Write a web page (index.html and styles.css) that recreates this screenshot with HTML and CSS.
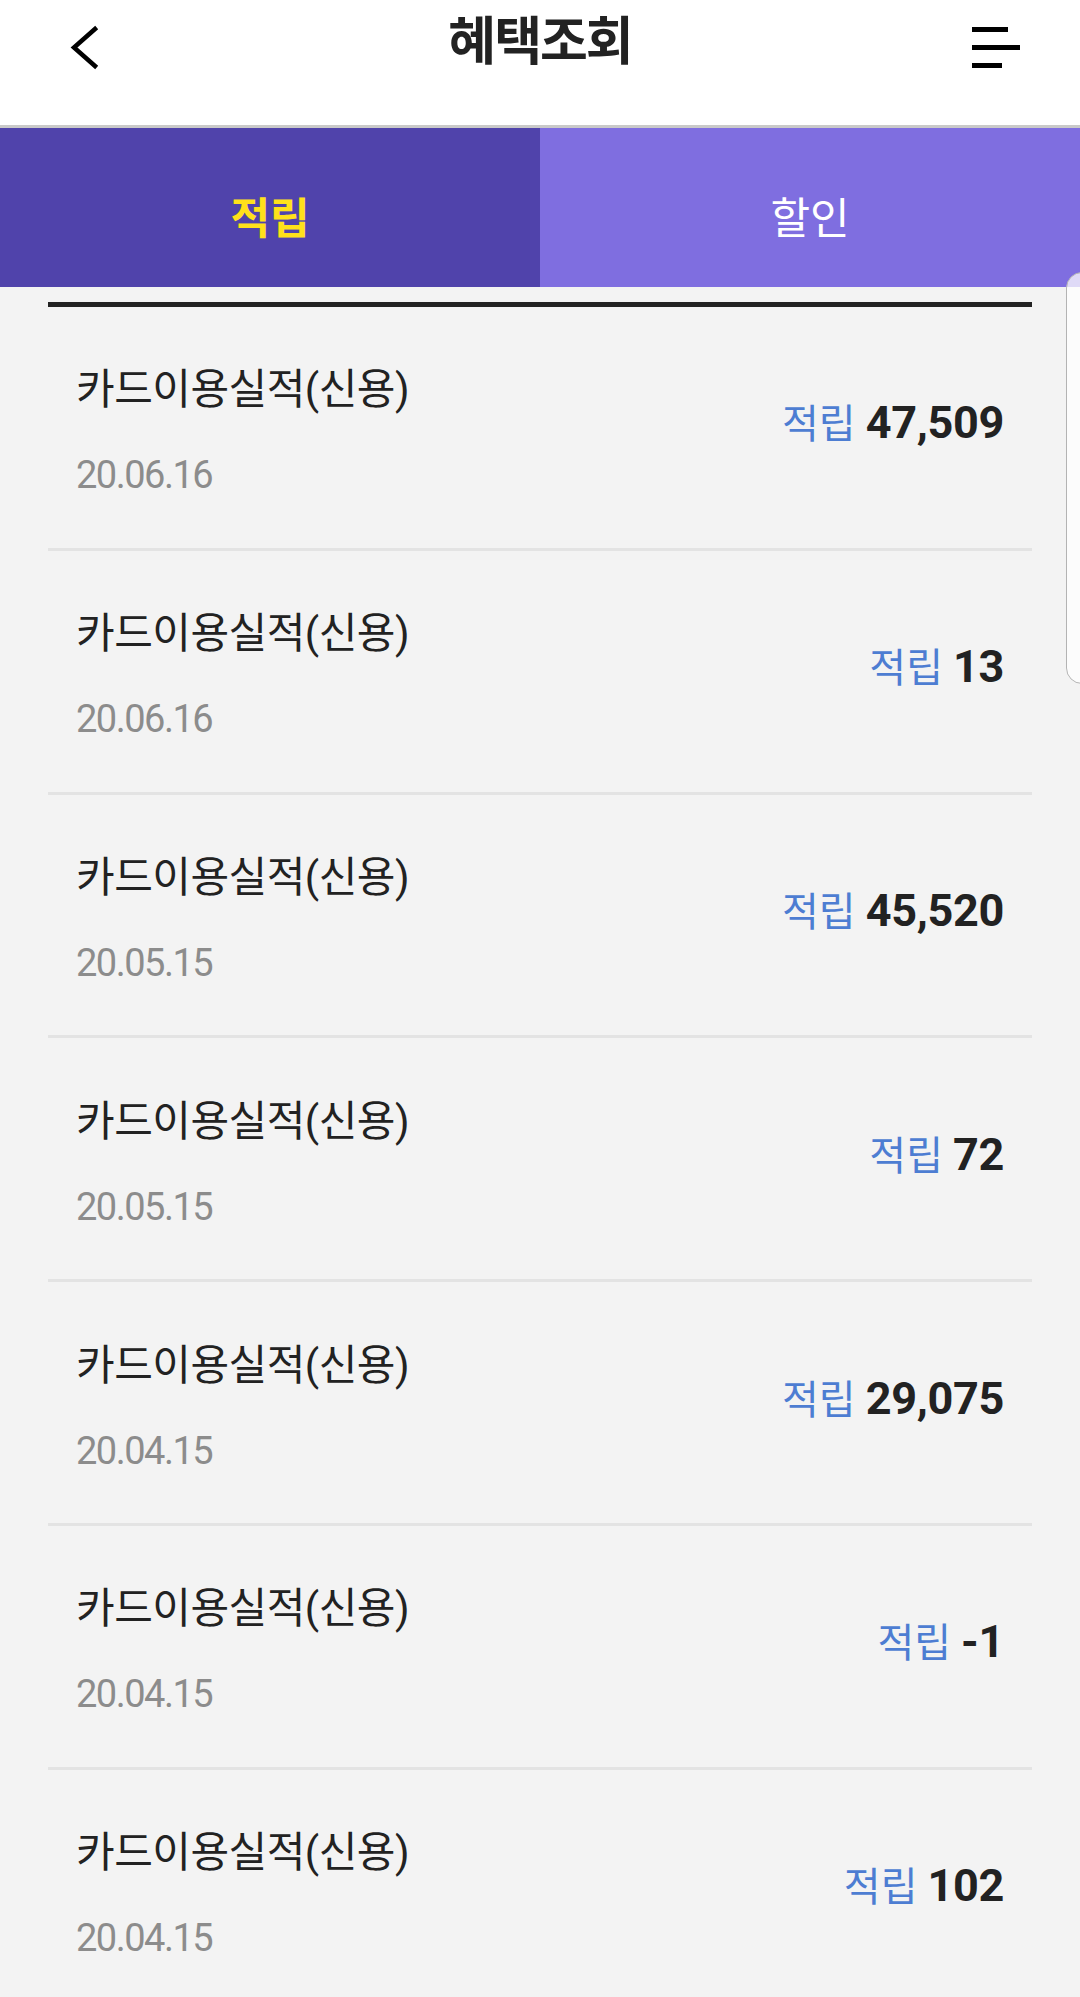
FILE: index.html
```html
<!DOCTYPE html>
<html lang="ko">
<head>
    <meta charset="UTF-8">
    <meta name="viewport" content="width=device-width, initial-scale=1.0">
    <title>혜택조회</title>
    <link rel="stylesheet" href="styles.css">
</head>
<body>

    <header class="header">
        <div class="header-left">
            <svg class="icon-back" width="44" height="56" viewBox="0 0 44 56">
                <polyline points="35,9 14,27.5 35,46" fill="none" stroke="#000" stroke-width="4.5" stroke-linecap="square" stroke-linejoin="miter"/>
            </svg>
        </div>
        <h1 class="title">혜택조회</h1>
        <div class="header-right">
            <svg class="icon-menu" width="48" height="48" viewBox="0 0 48 48">
                <rect x="0" y="3" width="36" height="5" fill="#000"/>
                <rect x="0" y="21" width="48" height="5" fill="#000"/>
                <rect x="0" y="39" width="30" height="5" fill="#000"/>
            </svg>
        </div>
    </header>

    <nav class="tabs">
        <div class="tab tab-active">적립</div>
        <div class="tab">할인</div>
    </nav>

    <div class="container">
        <ul class="benefit-list">
            <li class="benefit-row">
                <div class="benefit-info">
                    <p class="benefit-title">카드이용실적(신용)</p>
                    <p class="benefit-date">20.06.16</p>
                </div>
                <div class="benefit-amount"><span class="amount-label">적립</span><span class="amount-value">47,509</span></div>
            </li>
            <li class="benefit-row">
                <div class="benefit-info">
                    <p class="benefit-title">카드이용실적(신용)</p>
                    <p class="benefit-date">20.06.16</p>
                </div>
                <div class="benefit-amount"><span class="amount-label">적립</span><span class="amount-value">13</span></div>
            </li>
            <li class="benefit-row">
                <div class="benefit-info">
                    <p class="benefit-title">카드이용실적(신용)</p>
                    <p class="benefit-date">20.05.15</p>
                </div>
                <div class="benefit-amount"><span class="amount-label">적립</span><span class="amount-value">45,520</span></div>
            </li>
            <li class="benefit-row">
                <div class="benefit-info">
                    <p class="benefit-title">카드이용실적(신용)</p>
                    <p class="benefit-date">20.05.15</p>
                </div>
                <div class="benefit-amount"><span class="amount-label">적립</span><span class="amount-value">72</span></div>
            </li>
            <li class="benefit-row">
                <div class="benefit-info">
                    <p class="benefit-title">카드이용실적(신용)</p>
                    <p class="benefit-date">20.04.15</p>
                </div>
                <div class="benefit-amount"><span class="amount-label">적립</span><span class="amount-value">29,075</span></div>
            </li>
            <li class="benefit-row">
                <div class="benefit-info">
                    <p class="benefit-title">카드이용실적(신용)</p>
                    <p class="benefit-date">20.04.15</p>
                </div>
                <div class="benefit-amount"><span class="amount-label">적립</span><span class="amount-value">-1</span></div>
            </li>
            <li class="benefit-row">
                <div class="benefit-info">
                    <p class="benefit-title">카드이용실적(신용)</p>
                    <p class="benefit-date">20.04.15</p>
                </div>
                <div class="benefit-amount"><span class="amount-label">적립</span><span class="amount-value">102</span></div>
            </li>
        </ul>
    </div>

    <!-- edge panel handle -->
    <div class="edge-handle"></div>

</body>
</html>
```

FILE: styles.css
```css
* {
    margin: 0;
    padding: 0;
    box-sizing: border-box;
}

body {
    width: 1080px;
    background-color: #f3f3f3;
    font-family: Roboto, "Noto Sans CJK KR", sans-serif;
    color: #222;
    overflow: hidden;
}

/* Header */
.header {
    display: grid;
    grid-template-columns: 1fr auto 1fr;
    align-items: start;
    height: 128px;
    background: #fff;
    border-bottom: 3px solid #c9c9c9;
}

.header-left {
    padding-left: 60px;
}

.icon-back {
    display: block;
    margin-top: 20px;
}

.title {
    font-family: "Noto Sans CJK KR", sans-serif;
    font-size: 52px;
    font-weight: bold;
    line-height: 76px;
    letter-spacing: -2px;
    color: #222;
}

.header-right {
    justify-self: end;
    padding-right: 60px;
}

.icon-menu {
    display: block;
    margin-top: 24px;
}

/* Tabs */
.tabs {
    display: flex;
    height: 159px;
}

.tab {
    flex: 1;
    display: flex;
    align-items: center;
    justify-content: center;
    padding-top: 14px;
    background: #7f6ee0;
    color: #fff;
    font-family: "Noto Sans CJK KR", sans-serif;
    font-size: 43px;
}

.tab-active {
    background: #5043ab;
    color: #ffe11b;
    font-weight: bold;
}

/* List */
.container {
    padding: 15px 48px 0;
}

.benefit-list {
    list-style: none;
    border-top: 5px solid #222;
}

.benefit-row {
    display: flex;
    justify-content: space-between;
    align-items: center;
    height: 243.8px;
    padding: 0 28px;
    border-bottom: 3px solid #e3e3e3;
}

.benefit-info {
    padding-top: 8px;
}

.benefit-title {
    font-size: 42px;
    line-height: 50px;
    letter-spacing: -0.5px;
    color: #222;
}

.benefit-date {
    margin-top: 38px;
    font-size: 38px;
    line-height: 44px;
    letter-spacing: -1.5px;
    color: #8c8c8c;
}

.benefit-amount {
    line-height: 50px;
    white-space: nowrap;
}

.amount-label {
    font-family: "Noto Sans CJK KR", sans-serif;
    font-size: 40px;
    color: #4d7dd2;
    margin-right: 10px;
}

.amount-value {
    font-size: 45px;
    font-weight: bold;
    letter-spacing: -0.3px;
    color: #222;
}

.edge-handle {
    position: fixed;
    left: 1066px;
    top: 272px;
    width: 40px;
    height: 412px;
    border: 1.5px solid #b3b3b3;
    border-radius: 16px;
    background: rgba(255, 255, 255, 0.75);
}
```
